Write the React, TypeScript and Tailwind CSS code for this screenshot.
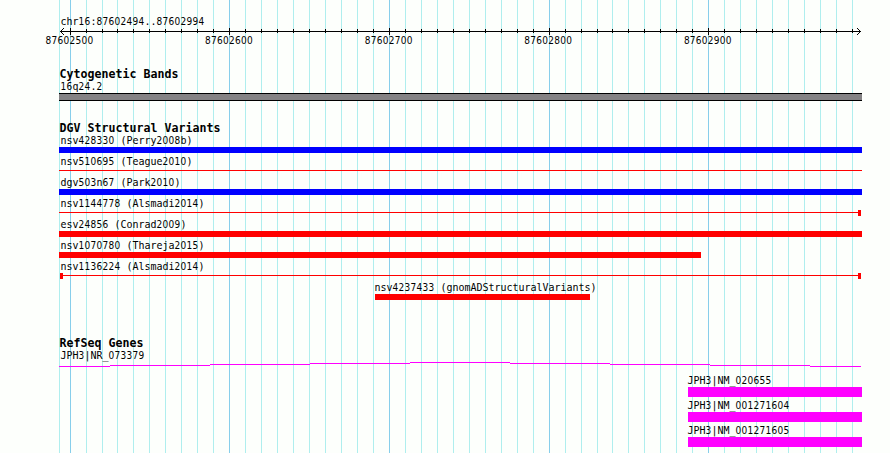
import React from 'react';

type Glyph = 'box' | 'line' | 'capRight' | 'capBoth';

type Feature = {
  name: string;
  glyph: Glyph;
  className: string;
};

const WIDTH = 890;
const HEIGHT = 453;
const POSITIONS = Array.from({ length: 50 }, (_, i) => i * 10);
const COORDS = ['87602500', '87602600', '87602700', '87602800', '87602900'];

const VARIANTS: Feature[] = [
  { name: 'nsv428330 (Perry2008b)', glyph: 'box', className: 'bg-[#0000ff]' },
  { name: 'nsv510695 (Teague2010)', glyph: 'line', className: '' },
  { name: 'dgv503n67 (Park2010)', glyph: 'box', className: 'bg-[#0000ff]' },
  { name: 'nsv1144778 (Alsmadi2014)', glyph: 'capRight', className: '' },
  { name: 'esv24856 (Conrad2009)', glyph: 'box', className: 'bg-[#ff0000]' },
  { name: 'nsv1070780 (Thareja2015)', glyph: 'box', className: 'w-[642px] bg-[#ff0000]' },
  { name: 'nsv1136224 (Alsmadi2014)', glyph: 'capBoth', className: '' },
];

const GENES = ['JPH3|NM_020655', 'JPH3|NM_001271604', 'JPH3|NM_001271605'];

// base offset from 87602500 -> pixel column
const toX = (offset: number) => Math.floor(70.08 + offset * 1.5968);

function Label({ children }: { children: string }) {
  return (
    <div className="h-[13px] pl-[1.5px] text-[10px] leading-[13px] tracking-[-0.02px] whitespace-pre">
      <span className="inline-block origin-[0_10px] scale-y-110">
        {children.split(/(\d+)/).map((part, i) =>
          /^\d/.test(part) ? (
            <span
              key={i}
              className="font-['DejaVu_Sans_Condensed','DejaVu_Sans',sans-serif] [font-stretch:condensed] tracking-[0.27px]"
            >
              {part}
            </span>
          ) : (
            part
          ),
        )}
      </span>
    </div>
  );
}

function Heading({ children }: { children: string }) {
  return (
    <h2 className="h-[13px] pl-[0.5px] text-[11.6px] leading-[13px] font-bold tracking-[0.016px] whitespace-pre">
      {children}
    </h2>
  );
}

function Grid() {
  return (
    <svg
      className="absolute inset-0"
      width={WIDTH}
      height={HEIGHT}
      shapeRendering="crispEdges"
    >
      <rect x={59} y={0} width={1} height={HEIGHT} fill="#afeeee" />
      {POSITIONS.map((p) => (
        <rect
          key={p}
          x={toX(p)}
          y={0}
          width={1}
          height={HEIGHT}
          fill={p % 100 === 0 ? '#87ceeb' : '#afeeee'}
        />
      ))}
    </svg>
  );
}

function Ruler() {
  return (
    <svg className="block" width={803} height={7} viewBox="59 28 803 7" shapeRendering="crispEdges">
      <rect x={60} y={31} width={801} height={1} />
      {[1, 2, 3].map((n) => (
        <g key={n}>
          <rect x={60 + n} y={31 - n} width={1} height={1} />
          <rect x={60 + n} y={31 + n} width={1} height={1} />
          <rect x={860 - n} y={31 - n} width={1} height={1} />
          <rect x={860 - n} y={31 + n} width={1} height={1} />
        </g>
      ))}
      {POSITIONS.map((p) =>
        p % 100 === 0 ? (
          <rect key={p} x={toX(p)} y={28} width={1} height={7} />
        ) : (
          <rect key={p} x={toX(p)} y={29} width={1} height={4} />
        ),
      )}
    </svg>
  );
}

function FeatureGlyph({ glyph, className }: { glyph: Glyph; className: string }) {
  if (glyph === 'box') return <div className={`h-1.5 ${className}`} />;
  if (glyph === 'line') return <div className="mt-0.5 mb-[3px] h-px bg-[#ff0000]" />;

  return (
    <div className={glyph === 'capBoth' ? 'flex h-1.5 pr-px pl-px' : 'flex h-1.5 pr-px'}>
      {glyph === 'capBoth' && <div className="w-[3px] bg-[#ff0000]" />}
      <div className="mt-0.5 h-px flex-1 bg-[#ff0000]" />
      <div className="w-[3px] bg-[#ff0000]" />
    </div>
  );
}

function Transcript() {
  const levels = [366, 365, 364, 363, 362, 363, 364, 365, 366];
  return (
    <svg className="block" width={803} height={5} viewBox="59 362 803 5" shapeRendering="crispEdges">
      {levels.map((y, i) => {
        const start = i === 0 ? 59 : 10 + i * 100;
        const end = i === 8 ? 861 : 110 + i * 100;
        return <rect key={i} x={start} y={y} width={end - start} height={1} fill="#ff00ff" />;
      })}
    </svg>
  );
}

export default function App() {
  return (
    <main className="relative h-[453px] w-[890px] overflow-hidden bg-[#fdfffc] font-['DejaVu_Sans_Mono',monospace] text-black">
      <Grid />
      <div className="relative ml-[59px] w-[803px] pt-[15px]">
        <Label>chr16:87602494..87602994</Label>
        <Ruler />
        <div className="-mt-px -ml-[15px] flex gap-[110.6px]">
          {COORDS.map((coord) => (
            <div key={coord} className="w-[49px] shrink-0">
              <Label>{coord}</Label>
            </div>
          ))}
        </div>

        <section className="pt-[21px]">
          <Heading>Cytogenetic Bands</Heading>
          <div className="-mt-px">
            <Label>16q24.2</Label>
          </div>
          <div className="h-2 border-y border-black bg-[#848284]" />
        </section>

        <section className="pt-[21px]">
          <Heading>DGV Structural Variants</Heading>
          <div className="-mt-px flex flex-col gap-0.5">
            {VARIANTS.map((v) => (
              <div key={v.name}>
                <Label>{v.name}</Label>
                <FeatureGlyph glyph={v.glyph} className={v.className} />
              </div>
            ))}
            <div className="ml-[314px]">
              <Label>nsv4237433 (gnomADStructuralVariants)</Label>
              <div className="ml-0.5 h-1.5 w-[215px] bg-[#ff0000]" />
            </div>
          </div>
        </section>

        <section className="pt-[37px]">
          <Heading>RefSeq Genes</Heading>
          <div className="-mt-px">
            <Label>JPH3|NR_073379</Label>
          </div>
          <Transcript />
          <div className="ml-[627px] flex flex-col gap-0.5 pt-[7px]">
            {GENES.map((gene) => (
              <div key={gene}>
                <Label>{gene}</Label>
                <div className="ml-0.5 h-2.5 bg-[#ff00ff]" />
              </div>
            ))}
          </div>
        </section>
      </div>
    </main>
  );
}
